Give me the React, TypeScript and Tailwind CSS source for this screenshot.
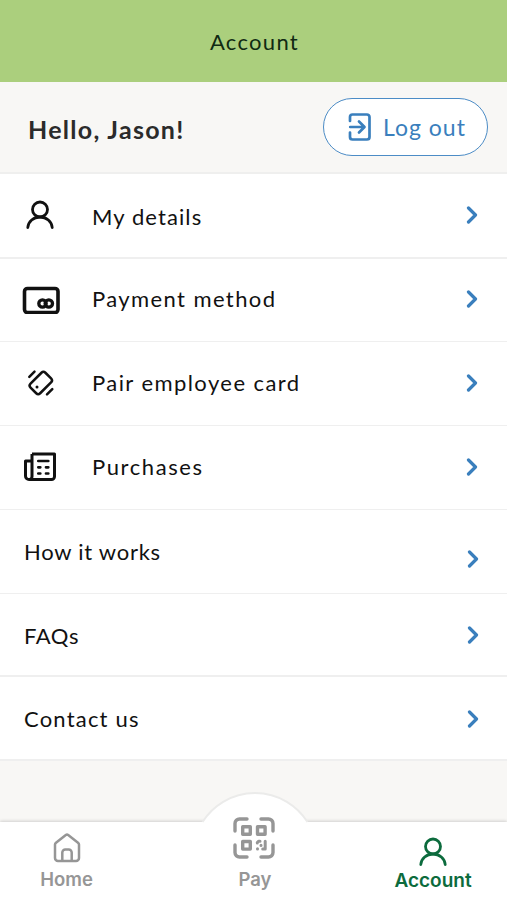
import type { ReactNode } from "react";
import clsx from "clsx";

function LogoutIcon() {
  return (
    <svg width="24" height="28" viewBox="0 0 24 28" fill="none" stroke="currentColor" strokeWidth="2.7" strokeLinecap="round" strokeLinejoin="round">
      <path d="M2 8V4a2.500 2.500 0 0 1 2.500-2.500h14.500A2.500 2.500 0 0 1 21.500 4v20a2.500 2.500 0 0 1-2.500 2.500h-14.500A2.500 2.500 0 0 1 2 24v-4.500" />
      <path d="M2.200 14H16M11 8.500l5.500 5.500-5.500 5.500" />
    </svg>
  );
}

function UserIcon({ className }: { className?: string }) {
  return (
    <svg className={className} width="30" height="30" viewBox="0 0 30 30" fill="none" stroke="currentColor" strokeWidth="2.800" strokeLinecap="round">
      <circle cx="15" cy="9.500" r="7.500" />
      <path d="M2.800 27.500C3.300 21.500 8.500 17 15 17s11.700 4.500 12.200 10.500" />
    </svg>
  );
}

function CardIcon() {
  return (
    <svg className="shrink-0" width="38" height="28" viewBox="0 0 38 28" fill="none" stroke="currentColor">
      <rect x="2.500" y="2.500" width="33.500" height="24" rx="3" strokeWidth="3.600" />
      <circle cx="20.500" cy="17.500" r="3.700" strokeWidth="3.300" />
      <circle cx="26.800" cy="17.500" r="3.700" strokeWidth="3.300" />
    </svg>
  );
}

function PairIcon() {
  return (
    <svg width="28" height="28" viewBox="0 0 28 28" fill="none" stroke="currentColor" strokeWidth="2.500" strokeLinecap="round" strokeLinejoin="round">
      <rect x="-10.500" y="-6.800" width="21" height="13.600" rx="2.800" transform="translate(13.800 14) rotate(-45)" />
      <path d="M2.300 7.800 7.500 2.600M20 25.400 25.300 20.200" />
      <circle cx="10" cy="18" r="1.500" fill="currentColor" stroke="none" />
    </svg>
  );
}

function ReceiptIcon() {
  return (
    <svg className="mr-[2px]" width="32" height="30" viewBox="0 0 32 30" fill="none" stroke="currentColor" strokeWidth="3" strokeLinejoin="round">
      <path d="M8 2h22.500v22.500a3 3 0 0 1-3 3H5a3.500 3.500 0 0 1-3.500-3.500V9H8" />
      <path d="M8 2v22.500a3 3 0 0 1-3 3" />
      <path d="M14.300 9H24.300M14.300 15.300H16.300M22 15.300h2.300M14.300 21.500H16.300M22 21.500h2.300" strokeLinecap="round" strokeWidth="2.700" />
    </svg>
  );
}

function HomeIcon() {
  return (
    <svg width="28" height="30" viewBox="0 0 28 30" fill="none" stroke="currentColor" strokeWidth="2.500" strokeLinejoin="round">
      <path d="M2 11.500Q2 10.500 3 9.700L12.800 2.100Q14 1.200 15.200 2.100L25 9.700Q26 10.500 26 11.500V25a3 3 0 0 1-3 3H5a3 3 0 0 1-3-3Z" />
      <path d="M9.300 28V19.500a3 3 0 0 1 3-3h3.400a3 3 0 0 1 3 3V28" />
    </svg>
  );
}

function QrIcon() {
  return (
    <svg width="42" height="42" viewBox="0 0 42 42" fill="none" stroke="currentColor" strokeWidth="3.400">
      <path d="M2 14V6.500A4.500 4.500 0 0 1 6.500 2H14M28 2h7.500A4.500 4.500 0 0 1 40 6.500V14M40 28v7.500a4.500 4.500 0 0 1-4.500 4.500H28M14 40H6.500A4.500 4.500 0 0 1 2 35.500V28" strokeLinecap="round" />
      <path d="M9.700 9.700h7.600v7.600H9.700zM24.500 9.700h7.600v7.600h-7.600zM9.700 24.500h7.600v7.600H9.700z" strokeLinejoin="round" />
      <path d="M24.300 26v-.5l1.200-1.200h1.500M32.200 24.300v7.800h-2.500M24.500 31.800v.2M28 28.300v.2" strokeWidth="3" strokeLinecap="round" strokeLinejoin="round" />
    </svg>
  );
}

function Chevron({ className }: { className?: string }) {
  return (
    <svg width="12" height="18" viewBox="0 0 12 18" fill="none" stroke="#3a7fbd" strokeWidth="3.200" strokeLinecap="round" strokeLinejoin="round" className={className}>
      <path d="M2.500 2 9.500 9l-7 7" />
    </svg>
  );
}

type Item = {
  label: string;
  icon?: ReactNode;
  row: string;
  text: string;
  chevron: string;
};

const items: Item[] = [
  { label: "My details", icon: <UserIcon className="mr-[2px]" />, row: "h-[85px] border-b-2", text: "tracking-[1.1px] pt-[2px]", chevron: "mr-[2px] mb-[2px]" },
  { label: "Payment method", icon: <CardIcon />, row: "h-[83px] border-b", text: "tracking-[1.4px] pb-[2px]", chevron: "mr-[2px] mb-[2px]" },
  { label: "Pair employee card", icon: <PairIcon />, row: "h-[84px] border-b", text: "tracking-[1.43px] pb-[1px]", chevron: "mr-[2px] mb-[2px]" },
  { label: "Purchases", icon: <ReceiptIcon />, row: "h-[84px] border-b", text: "tracking-[1.6px] pb-[1px]", chevron: "mr-[2px] mb-[2px]" },
  { label: "How it works", row: "h-[84px] border-b", text: "tracking-[0.75px]", chevron: "mt-[14px] mr-[1px]" },
  { label: "FAQs", row: "h-[83px] border-b-2", text: "tracking-[0.6px] pt-[2px]", chevron: "mr-[1px]" },
  { label: "Contact us", row: "h-[84px] border-b-2", text: "tracking-[1.2px] pt-[1px]", chevron: "mr-[1px] mt-[1px]" },
];

function MenuRow({ item }: { item: Item }) {
  return (
    <li className={clsx("flex items-center border-[#efefef] bg-white pr-[27px] pl-[22px]", item.row)}>
      {item.icon && <span className="flex w-9 justify-center pb-[1px] pl-px">{item.icon}</span>}
      <span className={clsx("flex-1 text-[22px] leading-7 whitespace-nowrap", item.icon ? "pl-[34px]" : "pl-[2px]", item.text)}>
        {item.label}
      </span>
      <Chevron className={item.chevron} />
    </li>
  );
}

function TabBar() {
  return (
    <nav className="relative flex h-[78px] bg-white font-['Inter',sans-serif] text-[18.5px] leading-6 font-semibold text-[#969696] shadow-[0_-1px_3px_rgba(0,0,0,0.16)]">
      {/* raised bump behind the Pay tab */}
      <svg className="absolute -top-9 left-[195px]" width="120" height="66" viewBox="0 0 120 66">
        <path d="M7.500 36.500A62 62 0 0 1 112.500 36.500V66H7.500Z" fill="white" />
        <path d="M7.500 36A62 62 0 0 1 112.500 36" fill="none" stroke="#ebebea" strokeWidth="2" />
      </svg>
      <div className="flex w-[133px] flex-col items-center pt-[11px]">
        <HomeIcon />
        <span className="mt-1">Home</span>
      </div>
      <div className="relative -mt-[5px] flex w-[242px] flex-col items-center">
        <QrIcon />
        <span className="mt-2 pl-[2px]">Pay</span>
      </div>
      <div className="flex w-[116px] flex-col items-center pt-[15px] text-[19px] text-[#0c6b3d]">
        <UserIcon />
        <span className="mt-[2px]">Account</span>
      </div>
    </nav>
  );
}

export default function App() {
  return (
    <div className="flex h-[900px] w-[507px] flex-col overflow-hidden bg-[#f8f7f5] font-['Lato',sans-serif] text-[#111111]">
      <header className="flex h-[82px] items-center justify-center bg-[#abcf7d] pt-[1px] pl-[2px]">
        <h1 className="text-[22px] leading-7 tracking-[1.3px] text-[#102a12]">Account</h1>
      </header>
      <div className="flex h-[92px] items-center justify-between border-b-2 border-[#efefee] pr-[19px] pl-7">
        <h2 className="pt-[4px] text-[25px] leading-8 font-bold tracking-[1.3px] text-[#2b2b2b]">Hello, Jason!</h2>
        <button className="flex h-[58px] w-[165px] items-center rounded-full border-[1.500px] border-[#4c8cc6] bg-white pl-6 text-[#3a7fbd]">
          <LogoutIcon />
          <span className="pl-[11px] text-[23px] leading-7 tracking-[1px]">Log out</span>
        </button>
      </div>
      <ul>
        {items.map((item) => (
          <MenuRow key={item.label} item={item} />
        ))}
      </ul>
      <div className="flex-1" />
      <TabBar />
    </div>
  );
}
